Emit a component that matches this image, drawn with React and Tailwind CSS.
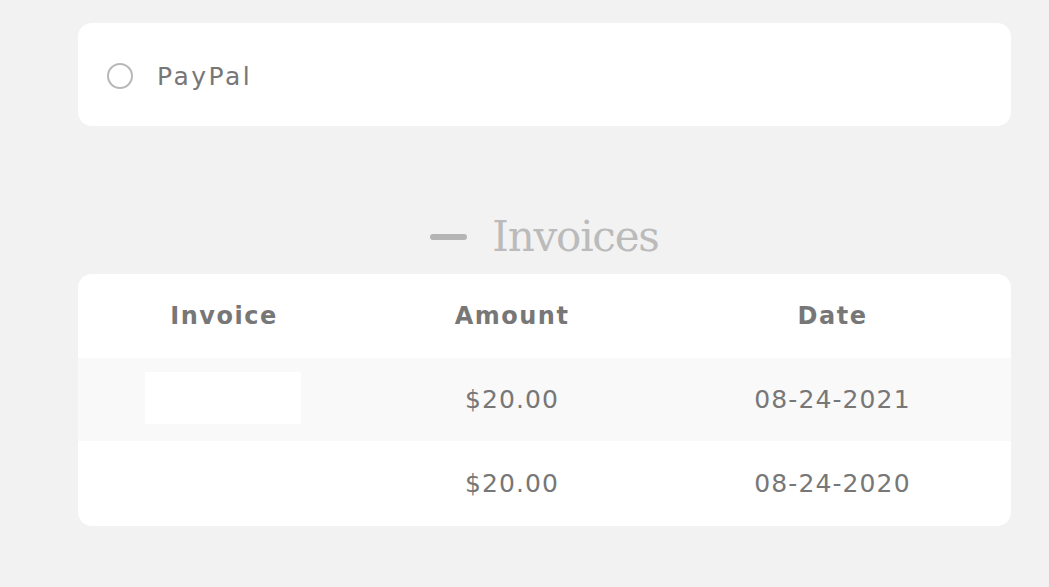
export default function App() {
  const sans = { fontFamily: '"DejaVu Sans", "Open Sans", sans-serif' };
  return (
    <div className="min-h-[587px] w-[1049px] bg-[#f2f2f2] pt-[23px] pl-[78px]" style={sans}>
      <div className="w-[933px]">
        <div className="flex h-[103px] items-center rounded-[14px] bg-white pt-[2px]">
          <div className="ml-[29px] h-[26px] w-[26px] rounded-full border-2 border-[#b8b8b8]" />
          <span className="ml-[24px] mt-[3px] text-[25px] tracking-[2.5px] text-[#777]">PayPal</span>
        </div>

        <div className="mt-[83px] flex h-[55px] items-center justify-center gap-[25px]">
          <div className="h-[6px] w-[37px] rounded-full bg-[#b5b5b5]" />
          <span className="text-[42px] tracking-[-1.2px] text-[#bbb]" style={{ fontFamily: '"DejaVu Serif", "Liberation Serif", serif' }}>Invoices</span>
        </div>

        <div className="mt-[10px] overflow-hidden rounded-[14px] bg-white">
          <div className="grid h-[84px] grid-cols-[292px_284px_357px] items-center text-center text-[24px] font-bold tracking-[1.5px] text-[#777]">
            <div>Invoice</div>
            <div>Amount</div>
            <div>Date</div>
          </div>
          <div className="grid h-[83px] grid-cols-[292px_284px_357px] items-center bg-[#f9f9f9] text-center text-[25px] tracking-[1.1px] text-[#777]">
            <div className="flex justify-center pr-[2px] pb-[4px]">
              <div className="h-[52px] w-[156px] bg-white" />
            </div>
            <div>$20.00</div>
            <div>08-24-2021</div>
          </div>
          <div className="grid h-[85px] grid-cols-[292px_284px_357px] items-center text-center text-[25px] tracking-[1.1px] text-[#777]">
            <div />
            <div>$20.00</div>
            <div>08-24-2020</div>
          </div>
        </div>
      </div>
    </div>
  );
}
